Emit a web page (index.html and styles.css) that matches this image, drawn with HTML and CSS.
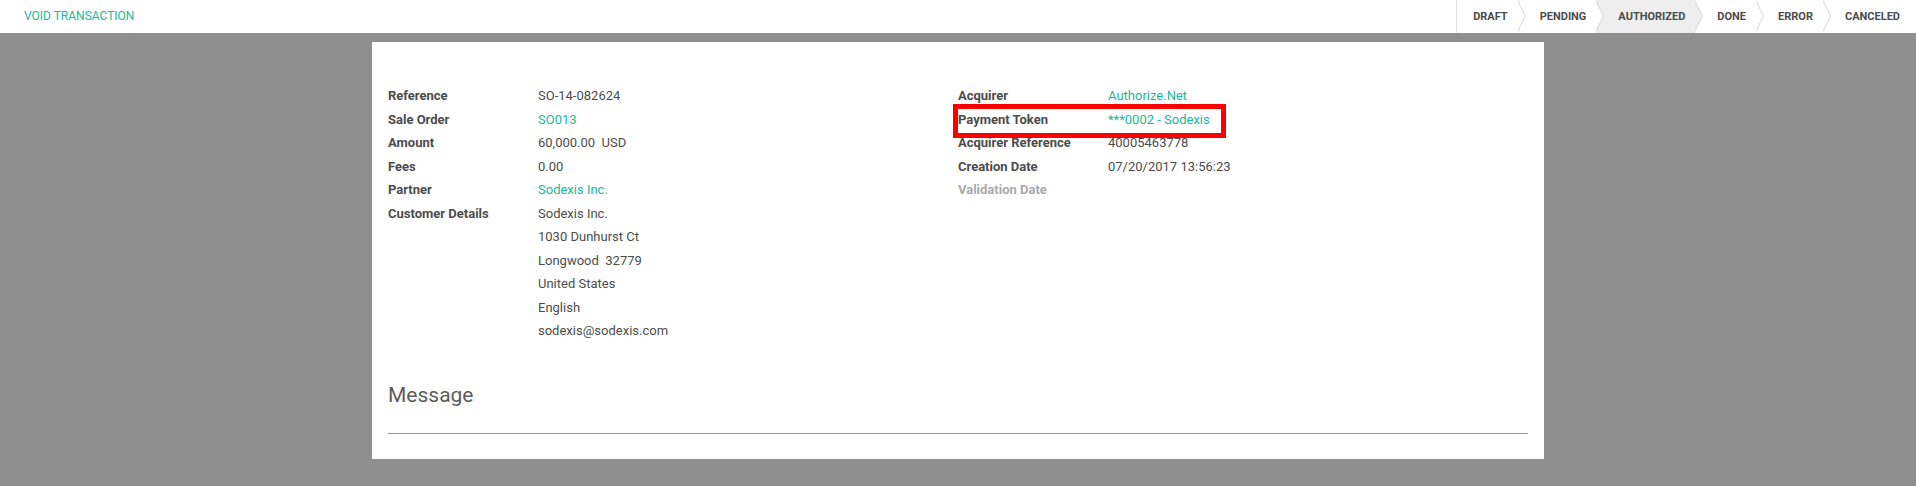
FILE: index.html
```html
<!DOCTYPE html>
<html>
<head>
<meta charset="utf-8">
<link rel="stylesheet" href="styles.css">
</head>
<body>
<header class="header">
  <div class="actions"><span class="void-btn">VOID TRANSACTION</span></div>
  <div class="statusbar">
    <span class="step first">DRAFT</span>
    <span class="step">PENDING</span>
    <span class="step active">AUTHORIZED</span>
    <span class="step">DONE</span>
    <span class="step">ERROR</span>
    <span class="step last">CANCELED</span>
  </div>
</header>
<main class="content">
  <div class="sheet">
    <div class="groups">
      <div class="group">
        <div class="row"><span class="label">Reference</span><span class="value">SO-14-082624</span></div>
        <div class="row"><span class="label">Sale Order</span><span class="value link">SO013</span></div>
        <div class="row"><span class="label">Amount</span><span class="value">60,000.00&nbsp; USD</span></div>
        <div class="row"><span class="label">Fees</span><span class="value">0.00</span></div>
        <div class="row"><span class="label">Partner</span><span class="value link">Sodexis Inc.</span></div>
        <div class="row"><span class="label">Customer Details</span>
          <span class="value multi">
            <span class="line">Sodexis Inc.</span>
            <span class="line">1030 Dunhurst Ct</span>
            <span class="line">Longwood&nbsp; 32779</span>
            <span class="line">United States</span>
            <span class="line">English</span>
            <span class="line">sodexis@sodexis.com</span>
          </span>
        </div>
      </div>
      <div class="group">
        <div class="row"><span class="label">Acquirer</span><span class="value link">Authorize.Net</span></div>
        <div class="row marked"><span class="label">Payment Token</span><span class="value link">***0002 - Sodexis</span><span class="red-box"></span></div>
        <div class="row"><span class="label">Acquirer Reference</span><span class="value">40005463778</span></div>
        <div class="row"><span class="label">Creation Date</span><span class="value">07/20/2017 13:56:23</span></div>
        <div class="row"><span class="label empty">Validation Date</span><span class="value"></span></div>
      </div>
    </div>
    <div class="separator">Message</div>
  </div>
</main>
</body>
</html>
```

FILE: styles.css
```css
* { box-sizing: border-box; }
html, body {
  margin: 0;
  padding: 0;
  background: #8f8f8f;
  font-family: Roboto, "Liberation Sans", sans-serif;
  color: #4c4c4c;
  font-size: 13px;
}
.header {
  height: 33px;
  background: #ffffff;
  display: flex;
  justify-content: space-between;
  align-items: stretch;
}
.actions {
  display: flex;
  align-items: center;
  padding-left: 24px;
}
.void-btn {
  color: #21b799;
  font-size: 12px;
  line-height: 33px;
}
.statusbar {
  display: flex;
  align-items: stretch;
  border-left: 1px solid #e0e0e0;
}
.step {
  position: relative;
  display: flex;
  align-items: center;
  font-size: 11px;
  font-weight: bold;
  color: #4c4c4c;
  padding: 0 10px 0 22px;
  background: #ffffff;
}
.step.first { padding-left: 16px; }
.step.last { padding-right: 16px; }
.step.active { background: #eeeeee; }
.step::before,
.step::after {
  content: "";
  position: absolute;
  top: 0;
  width: 0;
  height: 0;
  border-top: 16.5px solid transparent;
  border-bottom: 16.5px solid transparent;
  border-left: 8px solid #d6d6d6;
}
.step::before {
  left: 100%;
  z-index: 1;
}
.step::after {
  left: calc(100% - 1px);
  border-left-color: #ffffff;
  z-index: 2;
}
.step.active::after { border-left-color: #eeeeee; }
.step.last::before,
.step.last::after { display: none; }

.content {
  padding-top: 9px;
}
.sheet {
  width: 1172px;
  height: 417px;
  margin: 0 auto;
  background: #ffffff;
  padding: 42px 16px 0 16px;
}
.groups {
  display: flex;
}
.group {
  width: 570px;
}
.row {
  position: relative;
  display: flex;
  line-height: 23.5px;
}
.label {
  width: 150px;
  flex: none;
  font-weight: bold;
  color: #4c4c4c;
}
.label.empty { color: #a9a9a9; }
.value { color: #4c4c4c; }
.link { color: #21b799; }
.multi {
  display: flex;
  flex-direction: column;
}
.red-box {
  position: absolute;
  left: -5px;
  top: -4px;
  width: 273px;
  height: 34px;
  border: 5px solid #ff0000;
}
.separator {
  margin-top: 37px;
  font-size: 21px;
  line-height: 30px;
  color: #5c5c5c;
  padding-bottom: 23px;
  border-bottom: 1px solid #9a9a9a;
}
```
